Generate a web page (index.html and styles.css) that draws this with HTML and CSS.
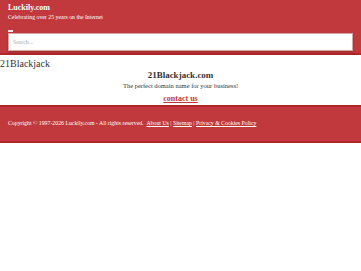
FILE: index.html
```html
<!DOCTYPE html>
<html lang="en">
<head>
    <meta charset="UTF-8">
    <meta name="viewport" content="width=device-width, initial-scale=1.0">
    <title>21Blackjack.com</title>
    <link rel="stylesheet" href="styles.css">
</head>
<body>
    <header class="site-header">
        <div class="brand">Luckily.com</div>
        <div class="tagline">Celebrating over 25 years on the Internet</div>
        <span class="search-label"></span>
        <div class="search-box">
            <input type="text" placeholder="Search...">
        </div>
    </header>
    <main>
        <h1 class="domain-title">21Blackjack</h1>
        <section class="domain-info">
            <h2>21Blackjack.com</h2>
            <p>The perfect domain name for your business!</p>
            <div class="contact-row"><a href="#" class="contact">contact us</a></div>
        </section>
    </main>
    <footer class="site-footer">
        <p>Copyright &copy; 1997-2026 Luckily.com - All rights reserved. &nbsp;<a href="#">About Us</a> | <a href="#">Sitemap</a> | <a href="#">Privacy &amp; Cookies Policy</a></p>
    </footer>
</body>
</html>
```

FILE: styles.css
```css
/* Global Styles */
body {
    font-family: 'Liberation Serif', 'DejaVu Serif', serif;
    margin: 0;
    padding: 0;
    background-color: #fff;
    color: #333;
}

/* Header */
.site-header {
    background-color: #c1393c;
    color: #fff;
    padding: 3px 8px 2px 8px;
    border-bottom: 2px solid #b02529;
}

.brand {
    font-size: 8px;
    font-weight: bold;
    line-height: 10px;
}

.tagline {
    font-size: 5.8px;
    line-height: 7px;
    margin-top: 1px;
}

.search-label {
    display: block;
    width: 5px;
    height: 2px;
    background: #f2e4e4;
    margin-top: 9px;
}

.search-box {
    margin-top: 1px;
    background: #fff;
    border: 1px solid #d9a5a6;
    box-shadow: 0 1px 2px rgba(0, 0, 0, 0.25);
    height: 16px;
    display: flex;
    align-items: center;
}

.search-box input {
    border: none;
    outline: none;
    background: transparent;
    font-family: inherit;
    font-size: 5.8px;
    padding: 0 4px;
    width: 100%;
    color: #333;
}

.search-box input::placeholder {
    color: #aaa;
}

/* Domain */
.domain-title {
    font-size: 10px;
    font-weight: normal;
    margin: 3px 0 0 0;
    line-height: 12px;
}

.domain-info {
    text-align: center;
}

.domain-info h2 {
    font-size: 9px;
    margin: 0;
    line-height: 11px;
}

.domain-info p {
    font-size: 6.5px;
    margin: 1px 0 0 0;
    line-height: 8px;
}

.contact-row {
    margin-top: 4px;
    font-size: 8px;
    line-height: 9px;
}

.contact {
    color: #c1393c;
    font-weight: bold;
}

/* Footer */
.site-footer {
    margin-top: 2px;
    background-color: #c1393c;
    border-top: 2px solid #b02529;
    border-bottom: 2px solid #b02529;
    color: #fff;
    padding: 13px 8px 14px 8px;
}

.site-footer p {
    margin: 0;
    font-size: 5.8px;
    line-height: 7px;
}

.site-footer a {
    color: #fff;
}
```
